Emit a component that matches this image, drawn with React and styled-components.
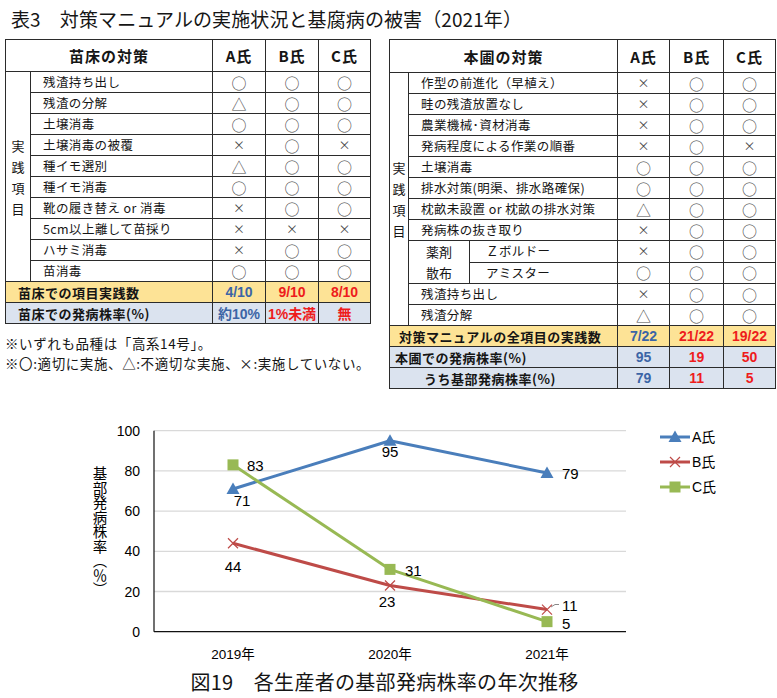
import React from 'react';
import styled, { createGlobalStyle, css } from 'styled-components';

const GlobalStyle = createGlobalStyle`
  html, body { margin: 0; padding: 0; background: #fff; }
  body {
    font-family: "Noto Sans CJK JP", "Liberation Sans", sans-serif;
    color: #151515;
  }
`;

const Page = styled.div`
  width: 777px;
  height: 698px;
  overflow: hidden;
`;

const Title = styled.h1`
  margin: 0;
  padding: 7px 0 0 11px;
  font-size: 19px;
  line-height: 24px;
  font-weight: 400;
  letter-spacing: 0.1px;
`;

const TablesRow = styled.div`
  display: flex;
  align-items: flex-start;
  gap: 18px;
  padding: 8px 0 0 5px;
`;

const LeftCol = styled.div`
  display: flex;
  flex-direction: column;
`;

const Table = styled.table`
  border-collapse: collapse;
  table-layout: fixed;
  width: ${p => p.$width}px;
  font-size: 12.5px;
`;

const HeadCell = styled.th`
  height: ${p => p.$h || 31}px;
  padding: 0;
  border: 1px solid #2b2b2b;
  font-size: 15px;
  font-weight: 700;
  letter-spacing: 1px;
  text-align: center;
`;

const Cell = styled.td`
  height: 20px;
  padding: 0 0 0 ${p => p.$indent || 0}px;
  border: 1px solid #2b2b2b;
  line-height: 1;
  white-space: nowrap;
  text-align: ${p => (p.$left ? 'left' : 'center')};
  letter-spacing: ${p => (p.$left ? '0.4px' : '0')};
`;

const MarkCell = styled(Cell)`
  font-size: ${p => (p.$mark === '×' ? '12px' : '15px')};
  color: #4a4a4a;
`;

const SideLabel = styled.td`
  padding: 0;
  border: 1px solid #2b2b2b;
  text-align: center;
  vertical-align: middle;
  font-size: 13px;
  line-height: 21px;
`;

const SubLabel = styled(SideLabel)`
  font-size: 13px;
`;

const SumRow = styled.tr`
  background: ${p => (p.$tone === 'yellow' ? '#fde396' : '#dbe3ef')};
  font-weight: 700;
  ${p => p.$dotted && css`
    td { border-bottom: 1px dotted #2b2b2b; }
  `}
`;

const SumLabel = styled.td`
  height: 20px;
  padding: 0 0 0 ${p => p.$indent || 10}px;
  border: 1px solid #2b2b2b;
  font-size: 13px;
  letter-spacing: 0.5px;
  white-space: nowrap;
`;

const SumValue = styled.td`
  height: 20px;
  padding: 0;
  border: 1px solid #2b2b2b;
  text-align: center;
  font-size: 14px;
  font-family: "Liberation Sans", "Noto Sans CJK JP", sans-serif;
  color: ${p => (p.$tone === 'blue' ? '#3b65a6' : '#ee1c1c')};
`;

const Notes = styled.div`
  margin-top: 10px;
  font-size: 13.5px;
  line-height: 19.6px;
  letter-spacing: 0.6px;
  white-space: nowrap;
`;

const Chart = styled.svg`
  display: block;
  margin-top: 1px;
  font-family: "Liberation Sans", "Noto Sans CJK JP", sans-serif;
`;

const Caption = styled.div`
  margin-top: 2px;
  text-align: center;
  font-size: 20px;
  line-height: 24px;
  letter-spacing: 0.3px;
  padding-right: 8px;
`;

const seedlingRows = [
  ['残渣持ち出し', '○', '○', '○'],
  ['残渣の分解', '△', '○', '○'],
  ['土壌消毒', '○', '○', '○'],
  ['土壌消毒の被覆', '×', '○', '×'],
  ['種イモ選別', '△', '○', '○'],
  ['種イモ消毒', '○', '○', '○'],
  ['靴の履き替え or 消毒', '×', '○', '○'],
  ['5cm以上離して苗採り', '×', '×', '×'],
  ['ハサミ消毒', '×', '○', '○'],
  ['苗消毒', '○', '○', '○'],
];

const fieldRows = [
  ['作型の前進化（早植え）', '×', '○', '○'],
  ['畦の残渣放置なし', '×', '○', '○'],
  ['農業機械･資材消毒', '×', '○', '○'],
  ['発病程度による作業の順番', '×', '○', '×'],
  ['土壌消毒', '○', '○', '○'],
  ['排水対策(明渠、排水路確保)', '○', '○', '○'],
  ['枕畝未設置 or 枕畝の排水対策', '△', '○', '○'],
  ['発病株の抜き取り', '×', '○', '○'],
  ['Ｚボルドー', '×', '○', '○', 'spray'],
  ['アミスター', '○', '○', '○', 'spray'],
  ['残渣持ち出し', '×', '○', '○'],
  ['残渣分解', '△', '○', '○'],
];

const Marks = ({ row }) =>
  row.slice(1, 4).map((m, i) => (
    <MarkCell key={i} $mark={m}>{m}</MarkCell>
  ));

const SideText = () => (
  <>実<br />践<br />項<br />目</>
);

function SeedlingTable() {
  return (
    <Table $width={365}>
      <colgroup>
        <col style={{ width: 25 }} />
        <col style={{ width: 182 }} />
        <col style={{ width: 53 }} />
        <col style={{ width: 53 }} />
        <col style={{ width: 52 }} />
      </colgroup>
      <thead>
        <tr>
          <HeadCell colSpan={2}>苗床の対策</HeadCell>
          <HeadCell>A氏</HeadCell>
          <HeadCell>B氏</HeadCell>
          <HeadCell>C氏</HeadCell>
        </tr>
      </thead>
      <tbody>
        {seedlingRows.map((row, i) => (
          <tr key={row[0]}>
            {i === 0 && (
              <SideLabel rowSpan={seedlingRows.length}><SideText /></SideLabel>
            )}
            <Cell $left $indent={12}>{row[0]}</Cell>
            <Marks row={row} />
          </tr>
        ))}
        <SumRow $tone="yellow">
          <SumLabel colSpan={2} $indent={12}>苗床での項目実践数</SumLabel>
          <SumValue $tone="blue">4/10</SumValue>
          <SumValue $tone="red">9/10</SumValue>
          <SumValue $tone="red">8/10</SumValue>
        </SumRow>
        <SumRow $tone="blue">
          <SumLabel colSpan={2} $indent={12}>苗床での発病株率(%)</SumLabel>
          <SumValue $tone="blue">約10%</SumValue>
          <SumValue $tone="red">1%未満</SumValue>
          <SumValue $tone="red">無</SumValue>
        </SumRow>
      </tbody>
    </Table>
  );
}

function FieldTable() {
  return (
    <Table $width={386}>
      <colgroup>
        <col style={{ width: 19 }} />
        <col style={{ width: 61 }} />
        <col style={{ width: 148 }} />
        <col style={{ width: 52 }} />
        <col style={{ width: 54 }} />
        <col style={{ width: 52 }} />
      </colgroup>
      <thead>
        <tr>
          <HeadCell colSpan={3} $h={32}>本圃の対策</HeadCell>
          <HeadCell $h={32}>A氏</HeadCell>
          <HeadCell $h={32}>B氏</HeadCell>
          <HeadCell $h={32}>C氏</HeadCell>
        </tr>
      </thead>
      <tbody>
        {fieldRows.map((row, i) => {
          const spray = row[4] === 'spray';
          const firstSpray = spray && fieldRows[i - 1][4] !== 'spray';
          return (
            <tr key={row[0]}>
              {i === 0 && (
                <SideLabel rowSpan={fieldRows.length}><SideText /></SideLabel>
              )}
              {firstSpray && <SubLabel rowSpan={2}>薬剤<br />散布</SubLabel>}
              {spray ? (
                <Cell $left $indent={16}>{row[0]}</Cell>
              ) : (
                <Cell $left $indent={12} colSpan={2}>{row[0]}</Cell>
              )}
              <Marks row={row} />
            </tr>
          );
        })}
        <SumRow $tone="yellow">
          <SumLabel colSpan={3} $indent={9}>対策マニュアルの全項目の実践数</SumLabel>
          <SumValue $tone="blue">7/22</SumValue>
          <SumValue $tone="red">21/22</SumValue>
          <SumValue $tone="red">19/22</SumValue>
        </SumRow>
        <SumRow $tone="blue" $dotted>
          <SumLabel colSpan={3} $indent={5}>本圃での発病株率(%)</SumLabel>
          <SumValue $tone="blue">95</SumValue>
          <SumValue $tone="red">19</SumValue>
          <SumValue $tone="red">50</SumValue>
        </SumRow>
        <SumRow $tone="blue">
          <SumLabel colSpan={3} $indent={34}>うち基部発病株率(%)</SumLabel>
          <SumValue $tone="blue">79</SumValue>
          <SumValue $tone="red">11</SumValue>
          <SumValue $tone="red">5</SumValue>
        </SumRow>
      </tbody>
    </Table>
  );
}

// chart geometry (svg starts right under the tables)
const X0 = 154;
const X1 = 626;
const BOTTOM = 241.7;
const yOf = v => BOTTOM - v * 2.01;
const xs = [233, 390, 547];
const years = ['2019年', '2020年', '2021年'];

const series = [
  {
    name: 'A氏', color: '#4a7ebb', marker: 'tri', values: [71, 95, 79],
    labels: [[242, 110.7, 'middle'], [390, 61.7, 'middle'], [562, 83.3, 'start']],
  },
  {
    name: 'B氏', color: '#be4b48', marker: 'x', values: [44, 23, 11],
    labels: [[233, 176.7, 'middle'], [387, 211.7, 'middle'], [562, 215.5, 'start']],
  },
  {
    name: 'C氏', color: '#98b954', marker: 'sq', values: [83, 31, 5],
    labels: [[247, 75, 'start'], [405, 180, 'start'], [562, 233.3, 'start']],
  },
];

function Marker({ type, x, y, color }) {
  if (type === 'tri') {
    return <polygon points={`${x},${y - 6.5} ${x + 6.5},${y + 5} ${x - 6.5},${y + 5}`} fill={color} />;
  }
  if (type === 'sq') {
    return <rect x={x - 5.5} y={y - 5.5} width={11} height={11} fill={color} />;
  }
  return (
    <path d={`M${x - 5},${y - 5} L${x + 5},${y + 5} M${x + 5},${y - 5} L${x - 5},${y + 5}`} stroke={color} strokeWidth={1.2} />
  );
}

function LineChart() {
  return (
    <Chart width={777} height={278} viewBox="0 0 777 278">
      {[20, 40, 60, 80, 100].map(v => (
        <line key={v} x1={X0} x2={X1} y1={yOf(v)} y2={yOf(v)} stroke="#d9d9d9" strokeWidth={1.3} />
      ))}
      <line x1={X0} x2={X0} y1={yOf(100)} y2={BOTTOM} stroke="#111" strokeWidth={1.2} />
      <line x1={X0} x2={X1} y1={BOTTOM} y2={BOTTOM} stroke="#111" strokeWidth={1.2} />
      {[0, 20, 40, 60, 80, 100].map(v => (
        <text key={v} x={140} y={yOf(v)} fontSize={14} textAnchor="end" dominantBaseline="central">{v}</text>
      ))}
      <text
        x={100}
        y={141.5}
        fontSize={14.5}
        textAnchor="middle"
        style={{ writingMode: 'vertical-rl', fontFamily: '"Noto Sans CJK JP", sans-serif' }}
      >
        基部発病株率（％）
      </text>
      {years.map((y, i) => (
        <text key={y} x={xs[i]} y={264} fontSize={13.5} textAnchor="middle" dominantBaseline="central">{y}</text>
      ))}
      {series.map(s => (
        <g key={s.name}>
          <polyline
            points={s.values.map((v, i) => `${xs[i]},${yOf(v)}`).join(' ')}
            fill="none"
            stroke={s.color}
            strokeWidth={3}
            strokeLinejoin="round"
          />
          {s.values.map((v, i) => (
            <Marker key={i} type={s.marker} x={xs[i]} y={yOf(v)} color={s.color} />
          ))}
        </g>
      ))}
      <path d="M551,217 L555,214.5 L559,214.5" fill="none" stroke="#888" strokeWidth={1} />
      {series.map(s =>
        s.values.map((v, i) => (
          <text
            key={s.name + i}
            x={s.labels[i][0]}
            y={s.labels[i][1]}
            fontSize={15}
            textAnchor={s.labels[i][2]}
            dominantBaseline="central"
          >
            {v}
          </text>
        ))
      )}
      {series.map((s, i) => {
        const ly = 47 + i * 25;
        return (
          <g key={s.name}>
            <line x1={660} x2={690} y1={ly} y2={ly} stroke={s.color} strokeWidth={3} />
            <Marker type={s.marker} x={675} y={ly} color={s.color} />
            <text x={692} y={ly} fontSize={14} dominantBaseline="central">{s.name}</text>
          </g>
        );
      })}
    </Chart>
  );
}

export default function App() {
  return (
    <Page>
      <GlobalStyle />
      <Title>表3　対策マニュアルの実施状況と基腐病の被害（2021年）</Title>
      <TablesRow>
        <LeftCol>
          <SeedlingTable />
          <Notes>
            ※いずれも品種は「高系14号」。<br />
            ※〇:適切に実施、△:不適切な実施、×:実施していない。
          </Notes>
        </LeftCol>
        <FieldTable />
      </TablesRow>
      <LineChart />
      <Caption>図19　各生産者の基部発病株率の年次推移</Caption>
    </Page>
  );
}
